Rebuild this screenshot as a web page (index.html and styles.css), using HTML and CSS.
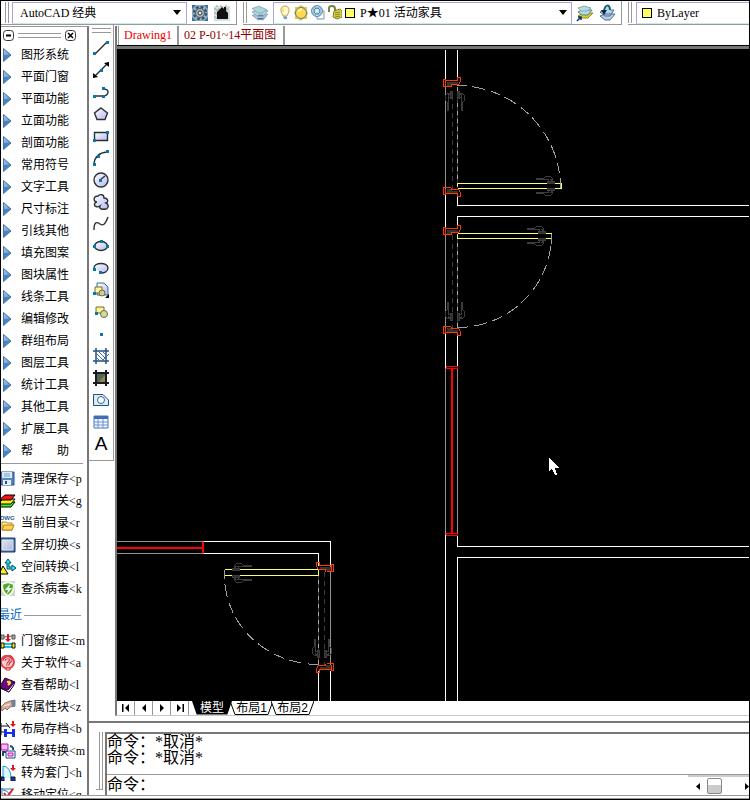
FILE: index.html
```html
<!DOCTYPE html>
<html lang="zh-CN">
<head>
<meta charset="utf-8">
<title>AutoCAD</title>
<link rel="stylesheet" href="styles.css">
</head>
<body>
<svg class="defs" aria-hidden="true">
  <defs>
    <linearGradient id="blue" x1="0" y1="0" x2="1" y2="1"><stop offset="0" stop-color="#a9c8e6"/><stop offset=".55" stop-color="#6f9fd0"/><stop offset="1" stop-color="#2a62a6"/></linearGradient>
    <linearGradient id="soft" x1="0" y1="0" x2="1" y2="1"><stop offset="0" stop-color="#fff"/><stop offset="1" stop-color="#b4b8ee"/></linearGradient>
    <linearGradient id="pale" x1="0" y1="0" x2="1" y2="1"><stop offset="0" stop-color="#d2ecec"/><stop offset="1" stop-color="#b6b4e2"/></linearGradient>
    <symbol id="tri" viewBox="0 0 10 16"><path d="M1.500 1.500V14.500L9 8Z" fill="url(#blue)" stroke="#3f74ac"/><path d="M2 8H8L2 13.500Z" fill="#4a82bf"/></symbol>
    <symbol id="down" viewBox="0 0 8 5"><path d="M0 0H8L4 5Z"/></symbol>
    <symbol id="layers" viewBox="0 0 16 16"><g stroke="#7f98ae" stroke-width=".7"><path d="M1 10L6 9H15L11 14H6Z" fill="#a8c4dc"/><path d="M1 7L6 6H15L11 11H6Z" fill="#b8dbe2"/><path d="M1 4L7 2L14 5L10 8H6Z" fill="#a9d8dc"/></g><path d="M6 13H11M6 10H11" stroke="#526d92"/></symbol>
    <g id="jamb"><path d="M3 4H14V6H8V8H3Z" fill="#333"/><path d="M7 9H0V2H2V8M2 3H14V0H17V4L15 7H8V9" fill="none" stroke="#ff3800"/></g>
    <g id="lever" fill="none" stroke="#3c3c3c"><path d="M0 2H8L10 0H15L17 2V5H13V3H0M14 3H16V5"/><path d="M12 5H19V7H12Z" fill="#2c2c2c"/></g>
    <g id="levers"><use href="#lever"/><use href="#lever" transform="translate(0 19) scale(1 -1)"/></g>
  </defs>
</svg>

<header class="toolbar">
  <div class="bar bar-space">
    <span class="grip"></span>
    <div class="combo">
      <select aria-label="工作空间"><option>AutoCAD 经典</option></select>
      <svg class="caret" width="8" height="5"><use href="#down"/></svg>
    </div>
    <button aria-label="工作空间设置"><svg width="18" height="18" viewBox="0 0 18 18"><path d="M1 1H17V17H1Z" fill="#8fb0c8"/><path d="M1 1H5L1 5ZM13 17H17V13ZM1 13V17H5ZM13 1H17V5Z" fill="#3f6f9e"/><circle cx="9" cy="9" r="6" fill="none" stroke="#40525e" stroke-width="2.500" stroke-dasharray="2.700 2"/><circle cx="9" cy="9" r="4.500" fill="#aab8b8" stroke="#4c5c66"/><circle cx="9" cy="9" r="2" fill="#d9f0f4" stroke="#334"/></svg></button>
    <button aria-label="我的工作空间"><svg width="18" height="18" viewBox="0 0 18 18"><path d="M1 2H17V17H1Z" fill="#d4dfe0"/><path d="M1 5H17M1 9H17M1 13H17M4 1V17M8 1V17M13 1V17" stroke="#8fa1a3" stroke-dasharray="2 2"/><path d="M4 8L9 3L11 5V3H13V7L15 9V15H4Z" fill="#111"/></svg></button>
  </div>
  <div class="bar bar-layer">
    <span class="grip"></span>
    <button aria-label="图层特性"><svg width="18" height="18"><use href="#layers"/></svg></button>
    <div class="combo">
      <svg width="12" height="16" viewBox="0 0 12 16"><path d="M4 10C1 7 1 1 6 1S11 7 8 10V11H4Z" fill="#fffbd5" stroke="#c09a45"/><path d="M4 11.500H8V14H5Z" fill="#799bb8"/><path d="M4 3V7" stroke="#ffe56d" stroke-width="2"/></svg>
      <svg width="14" height="16" viewBox="0 0 14 16"><path d="M1 2H4L7 0L10 2H13V6L14 8L13 11V14H9L7 16L4 14H1V10L0 8L1 5Z" fill="#edc23c"/><circle cx="7" cy="8" r="5.500" fill="#ffd84d" stroke="#4885a5"/><path d="M4 6L8 4" stroke="#fff8a8" stroke-width="2"/></svg>
      <svg width="14" height="16" viewBox="0 0 14 16"><path d="M6 6H13V14H6Z" fill="#fff" stroke="#8093a3"/><circle cx="6" cy="6" r="5.500" fill="#93bed4" stroke="#608fae"/><path d="M6 1V11M1 6H11M3 3L9 9M9 3L3 9" stroke="#e6faff"/><circle cx="6" cy="6" r="3" fill="none" stroke="#477ba1"/></svg>
      <svg width="14" height="16" viewBox="0 0 14 16"><path d="M1 7V3Q1 1 4 1T7 4V8" fill="none" stroke="#6b8a40" stroke-width="2"/><path d="M6 6L12 4L14 6V12L9 14L5 12Z" fill="#ddd13b" stroke="#817c27"/><path d="M7 8L12 7M7 10L12 9M7 12L12 11" stroke="#7f8a2c"/></svg>
      <span class="swatch"></span>
      <select aria-label="图层"><option>P★01 活动家具</option></select>
      <svg class="caret" width="8" height="5"><use href="#down"/></svg>
    </div>
    <button aria-label="将对象的图层置为当前"><svg width="18" height="18" viewBox="0 0 18 18"><path d="M2 12L7 9H17L12 14H6Z" fill="#dfcf22" stroke="#8d882c"/><path d="M2 8L6 6H16L12 11H6Z" fill="#b5dcdf" stroke="#577f92"/><path d="M2 4L8 2L15 4L11 7H5Z" fill="#b5dcdf" stroke="#85a8ae"/><path d="M1 17L5 13M2 13H5V16" stroke="#08366b" fill="none" stroke-width="1.500"/></svg></button>
    <button aria-label="上一个图层"><svg width="18" height="18" viewBox="0 0 18 18"><path d="M2 12L7 10H17L12 16H7ZM2 8L7 6H16L12 12H7Z" fill="#b7cfe2" stroke="#536d93"/><path d="M7 2L14 5L11 8H5Z" fill="#b5dcdf"/><path d="M12 6C12 0 7 0 6 7" fill="none" stroke="#17627b" stroke-width="2"/><path d="M3 6H9L6 11Z" fill="#09285a"/></svg></button>
  </div>
  <div class="bar bar-color">
    <span class="grip"></span>
    <div class="combo">
      <span class="swatch"></span>
      <select aria-label="颜色"><option>ByLayer</option></select>
    </div>
  </div>
</header>

<div class="workspace">
  <aside class="menu">
    <div class="menu-head">
      <button aria-label="折叠"><svg width="11" height="11" viewBox="0 0 11 11"><rect x=".5" y=".5" width="10" height="10" rx="3" fill="#fff" stroke="#333"/><path d="M3 5.500H8" stroke="#000" stroke-width="2"/></svg></button>
      <span class="rails"></span>
      <button aria-label="关闭"><svg width="11" height="11" viewBox="0 0 11 11"><rect x=".5" y=".5" width="10" height="10" rx="3" fill="#fff" stroke="#333"/><path d="M3 3L8 8M8 3L3 8" stroke="#000" stroke-width="1.500"/></svg></button>
    </div>
    <nav class="groups">
      <button><svg><use href="#tri"/></svg>图形系统</button>
      <button><svg><use href="#tri"/></svg>平面门窗</button>
      <button><svg><use href="#tri"/></svg>平面功能</button>
      <button><svg><use href="#tri"/></svg>立面功能</button>
      <button><svg><use href="#tri"/></svg>剖面功能</button>
      <button><svg><use href="#tri"/></svg>常用符号</button>
      <button><svg><use href="#tri"/></svg>文字工具</button>
      <button><svg><use href="#tri"/></svg>尺寸标注</button>
      <button><svg><use href="#tri"/></svg>引线其他</button>
      <button><svg><use href="#tri"/></svg>填充图案</button>
      <button><svg><use href="#tri"/></svg>图块属性</button>
      <button><svg><use href="#tri"/></svg>线条工具</button>
      <button><svg><use href="#tri"/></svg>编辑修改</button>
      <button><svg><use href="#tri"/></svg>群组布局</button>
      <button><svg><use href="#tri"/></svg>图层工具</button>
      <button><svg><use href="#tri"/></svg>统计工具</button>
      <button><svg><use href="#tri"/></svg>其他工具</button>
      <button><svg><use href="#tri"/></svg>扩展工具</button>
      <button><svg><use href="#tri"/></svg>帮　　助</button>
    </nav>
    <div class="shortcuts ruled">
      <button><svg viewBox="0 0 15 16"><path d="M0 1H13V14H0Z" fill="#5688c7" stroke="#244f92"/><path d="M1 1H11V7H1Z" fill="#dceaf8"/><path d="M3 3H9M3 5H9" stroke="#7d9bc4"/><path d="M2 9H10V14H2Z" fill="#e7edf4"/><path d="M4 10H6V13H4Z" fill="#244f92"/></svg>清理保存&lt;p</button>
      <button><svg viewBox="0 0 15 16"><g stroke="#000"><path d="M-3 14L2 9H14L10 14Z" fill="#3df02c"/><path d="M-3 11L2 6H14L10 11Z" fill="#ffed1c"/><path d="M-2 7L4 2H14L10 7Z" fill="#f31616"/></g></svg>归层开关&lt;g</button>
      <button><svg viewBox="0 0 15 16"><text x="-1" y="5" class="dwg">DWG</text><path d="M1 7H5L6 8H11V15H1Z" fill="#fff2a2" stroke="#b6841b"/><path d="M3 10H13L11 15H1Z" fill="#ffd24c" stroke="#b6841b"/></svg>当前目录&lt;r</button>
      <button><svg viewBox="0 0 15 16"><path d="M-1 1H14V15H-1Z" fill="#526f9b" stroke="#173a6c"/><path d="M1 3H12V13H1Z" fill="url(#pale)" stroke="#d9e7f4"/></svg>全屏切换&lt;s</button>
      <button><svg viewBox="0 0 15 16"><path d="M-2 15L2 7L7 15Z" fill="#fff21d" stroke="#000"/><path d="M6 10V4H4L7 0L10 4H8V8H11V6L15 9L11 12V10Z" fill="#22dff0" stroke="#09505c"/></svg>空间转换&lt;l</button>
      <button><svg viewBox="0 0 15 16"><path d="M0 0H14V15H0Z" fill="#cfd4cc"/><path d="M7 1L13 3C13 10 11 13 7 15C3 13 1 10 1 3Z" fill="#4fa82b" stroke="#eef8eb" stroke-width="2"/><path d="M9 3L4 9H7L6 13L11 7H8Z" fill="#fff"/></svg>查杀病毒&lt;k</button>
    </div>
    <h2 class="recent">最近</h2>
    <div class="shortcuts">
      <button><svg viewBox="0 0 15 16"><path d="M0 2H3V6H0ZM11 2H14V6H11ZM3 4L11 3" fill="#aaa" stroke="#555"/><path d="M6 1H8V6H10L7 9L4 6H6Z" fill="#e6101c"/><path d="M2 11H12M2 14H12" stroke="#20bde4" stroke-width="2"/><path d="M0 10H3V15H0ZM11 10H14V15H11Z" fill="#ffe71d" stroke="#111"/></svg>门窗修正&lt;m</button>
      <button><svg viewBox="0 0 15 16"><circle cx="6.500" cy="7" r="6.500" fill="#fbd0d0" stroke="#e0444c" stroke-width="2"/><path d="M3 6C3 2 10 2 10 5C10 7 6 7 7 11" fill="none" stroke="#d02838" stroke-width="3"/><path d="M3 6C3 2 10 2 10 5C10 7 6 7 7 11" fill="none" stroke="#fff"/><path d="M5 13H9V15H5Z" fill="#fff" stroke="#d22"/></svg>关于软件&lt;a</button>
      <button><svg viewBox="0 0 15 16"><path d="M-1 9L4 1L14 5L8 15L-1 11Z" fill="#6c087b" stroke="#280035"/><path d="M0 11L7 13L13 6V8L8 15Z" fill="#fff" stroke="#280035"/><path d="M6 5Q9 4 9 6L7 8" fill="none" stroke="#ffe436" stroke-width="2"/></svg>查看帮助&lt;l</button>
      <button><svg viewBox="0 0 15 16"><path d="M0 8L4 4L9 2L14 1V7L9 8L6 11L4 9L1 12Z" fill="#dbac98" stroke="#9b6d67"/><path d="M10 1H14V8H11Z" fill="#6f839e"/><path d="M3 7L9 5" stroke="#fff0e2"/></svg>转属性块&lt;z</button>
      <button><svg viewBox="0 0 15 16"><path d="M0 5H8M0 11H5M5 2L9 7M0 2V14" stroke="#111" fill="none"/><path d="M3 8H14V16H3Z" fill="#1732df"/><path d="M6 8H11V11H6ZM6 13H11V16H6Z" fill="#fff"/><path d="M11 0H13V3H15L12 6L9 3H11Z" fill="#e9121d"/></svg>布局存档&lt;b</button>
      <button><svg viewBox="0 0 15 16"><path d="M0 1H7V7H0Z" fill="#ffb2f4" stroke="#b014ad"/><path d="M9 3Q13 4 12 7M5 9H2V13" fill="none" stroke="#164881" stroke-width="2"/><path d="M5 8H14V15H5Z" fill="#fff" stroke="#164881"/><path d="M7 10H12V13H7Z" fill="#ffb2f4" stroke="#c019b8"/></svg>无缝转换&lt;m</button>
      <button><svg viewBox="0 0 15 16"><path d="M2 13V1Q10 2 10 13" fill="#d8f7ff" stroke="#1b9cbd"/><path d="M0 12H3V16H0ZM10 12H14V16H10Z" fill="#1732df" stroke="#111"/><path d="M11 0H13V3H15L12 6L9 3H11Z" fill="#e9121d"/></svg>转为套门&lt;h</button>
      <button><svg viewBox="0 0 15 16"><path d="M0 2H13M1 1V15M2 3Q9 4 10 12" fill="none" stroke="#277bc1"/><path d="M3 6L6 10L12 2" fill="none" stroke="#e31b25" stroke-width="2"/></svg>移动定位&lt;q</button>
    </div>
  </aside>

  <div class="draw">
    <div class="draw-tools">
      <span class="rails"></span>
      <button aria-label="直线"><svg viewBox="0 0 16 16"><path d="M2 14L14 2" class="k"/><path d="M0 12H3V15H0ZM13 1H16V4H13Z" class="n"/></svg></button>
      <button aria-label="构造线"><svg viewBox="0 0 16 16"><path d="M1 15L15 1" class="k"/><path d="M0 16V11L5 15ZM16 0V5L11 1Z"/><path d="M7 7H10V10H7Z" class="n"/></svg></button>
      <button aria-label="多段线"><svg viewBox="0 0 16 16"><path d="M1 12H11M10 5Q15 5 15 8T11 12" class="k"/><path d="M0 11H3V14H0ZM9 11H12V14H9ZM9 3H12V6H9Z" class="n"/></svg></button>
      <button aria-label="正多边形"><svg viewBox="0 0 16 16"><path d="M8 2L14.500 7L12 13.500H4L1.500 7Z" class="k s"/></svg></button>
      <button aria-label="矩形"><svg viewBox="0 0 16 16"><path d="M1.500 4.500H14.500V12.500H1.500Z" class="k s"/><path d="M0 11H3V14H0ZM13 3H16V6H13Z" class="n"/></svg></button>
      <button aria-label="圆弧"><svg viewBox="0 0 16 16"><path d="M1 14Q2 3 14 2" class="k"/><path d="M0 13H3V16H0ZM4 5H7V8H4ZM13 0H16V3H13Z" class="n"/></svg></button>
      <button aria-label="圆"><svg viewBox="0 0 16 16"><circle cx="8" cy="8" r="7" class="k s"/><path d="M7 8L12 4" class="k"/><path d="M6 7H9V10H6Z" class="n"/></svg></button>
      <button aria-label="修订云线"><svg viewBox="0 0 16 16"><path d="M5 2C7 0 11 0 11 4C15 4 16 8 13 9C17 11 15 16 11 15C8 16 6 14 7 12C4 14 0 12 2 9C3 8 4 8 4 8C0 8 0 2 5 2Z" class="k s"/></svg></button>
      <button aria-label="样条曲线"><svg viewBox="0 0 16 16"><path d="M1 14C1 5 4 6 7 8S12 9 15 1" class="k"/></svg></button>
      <button aria-label="椭圆"><svg viewBox="0 0 16 16"><ellipse cx="8" cy="8" rx="6.500" ry="4.500" class="k s"/><path d="M0 7H3V10H0ZM13 7H16V10H13ZM7 2H10V5H7Z" class="n"/></svg></button>
      <button aria-label="椭圆弧"><svg viewBox="0 0 16 16"><path d="M1 8C1 2 15 2 15 8C15 11 12 13 8 13" class="k s"/><path d="M0 8H3V11H0ZM6 11H9V14H6Z" class="n"/></svg></button>
      <button aria-label="插入块"><svg viewBox="0 0 16 16"><path d="M4 1H11L15 5V13H4Z" class="s" stroke="#3b6b91"/><path d="M2 5H9V11H2Z" fill="#fff7a4" stroke="#756f30"/><circle cx="9" cy="11" r="3" fill="#d4d080" stroke="#656c4a"/><path d="M0 10H3V13H0Z" class="n"/><path d="M16 12V16H12Z"/></svg></button>
      <button aria-label="创建块"><svg viewBox="0 0 16 16"><path d="M3 3H11V9H3Z" fill="#fff493" stroke="#756f30"/><circle cx="11" cy="10" r="3.500" fill="#d4dba0" stroke="#656c4a"/><path d="M2 8H5V11H2Z" class="n"/></svg></button>
      <button aria-label="点"><svg viewBox="0 0 16 16"><path d="M7 7H10V10H7Z" class="n"/></svg></button>
      <button aria-label="图案填充"><svg viewBox="0 0 16 16"><path d="M3 0V16M13 0V16M0 3H16M0 13H16" stroke="#235087" stroke-width="1.500"/><path d="M3 9L7 13M3 5L11 13M5 3L13 11M9 3L13 7M9 13L16 6" stroke="#477099" fill="none"/></svg></button>
      <button aria-label="渐变色"><svg viewBox="0 0 16 16"><path d="M3 3H13V13H3Z" fill="#55645a"/><path d="M6 12L12 5V12Z" fill="#92884b"/><path d="M3 0V16M13 0V16M0 3H16M0 13H16" stroke="#171b22" stroke-width="2"/></svg></button>
      <button aria-label="面域"><svg viewBox="0 0 16 16"><path d="M.5 2.500H10L15.500 8V13.500H.5Z" fill="#dcecf7" stroke="#17538b"/><circle cx="8" cy="8" r="3.500" fill="#fff" stroke="#37658a"/></svg></button>
      <button aria-label="表格"><svg viewBox="0 0 16 16"><path d="M1 2H15V14H1Z" fill="#f4f9ff" stroke="#4a72b7"/><path d="M1 2H15V5H1Z" fill="#426bb8"/><path d="M1 8H15M1 11H15M5 5V14M10 5V14" stroke="#6b92d0"/></svg></button>
      <button class="letter" aria-label="多行文字">A</button>
    </div>

    <main class="document">
      <nav class="files">
        <a href="#drawing" class="current">Drawing1</a>
        <a href="#plan">02 P-01~14平面图</a>
      </nav>
      <svg class="canvas" id="drawing" role="img" aria-label="平面图">
        <g transform="translate(-116.500 -48.500)" fill="none" shape-rendering="crispEdges">
          <g stroke="#fff">
            <path d="M445 49V82M445 190V230M445 330V367M445 534V700M457 49V79M457 193V205H750M750 216H457V227M457 332V367M457 534V546H750M750 557H457V700"/>
            <path d="M203 541H330V565M203 553H318V565M318 670V700M330 670V700"/>
          </g>
          <g stroke="#929292">
            <path d="M445 82V190M445 230V330M445 367V534M457 367V534M116 541H203M116 553H203M330 565V669"/>
          </g>
          <g stroke="#3c3c3c"><path d="M452 94V190M452 234V330M324 571V664" stroke-dasharray="5 4"/><path d="M457 86V187M457 234V327M318 571V664"/></g>
          <path d="M457 86V187M457 234V327M318 571V664" stroke="#aaa" stroke-dasharray="4 4"/>
          <g stroke="#ffff6d">
            <path d="M457 185V183H561V188H457"/>
            <path d="M457 238V233M457 233H551M457 238H551"/>
            <path d="M318 569H224M318 569V575H224"/>
          </g>
          <g stroke="#a0a0a0">
            <path d="M560 180V187M551 233V243M224 569V577"/>
            <path d="M457 85A104 103 0 0 1 560 183" stroke-dasharray="10 5 13 6"/>
            <path d="M457 327A94 93 0 0 0 551 238" stroke-dasharray="11 6 13 5"/>
            <path d="M318 664A94 89 0 0 1 224 575" stroke-dasharray="11 6 13 5"/>
          </g>
          <g>
            <use href="#levers" x="535" y="176"/>
            <use href="#levers" x="526" y="226"/>
            <use href="#levers" transform="translate(251 563) scale(-1 1)"/>
            <use href="#levers" transform="translate(445 110) rotate(-90)"/>
            <use href="#levers" transform="translate(464 301) rotate(90)"/>
            <use href="#levers" transform="translate(331 638) rotate(90)"/>
          </g>
          <g>
            <use href="#jamb" transform="translate(443 77)"/>
            <use href="#jamb" transform="translate(443 196) scale(1 -1)"/>
            <use href="#jamb" transform="translate(443 225)"/>
            <use href="#jamb" transform="translate(443 335) scale(1 -1)"/>
            <use href="#jamb" transform="translate(333 562) scale(-1 1)"/>
            <use href="#jamb" transform="translate(333 672) scale(-1 -1)"/>
          </g>
          <path transform="translate(-.5 -.5)" d="M451 368H453V534H451ZM116 547H203V549H116ZM202 542H204V553H202Z" fill="#f00"/>
          <path d="M446 366H457V368H446ZM446 533H457V535H446Z" stroke="#f00"/>
          <path d="M548 457V471L551 468L554 474H556V472L554 467H558Z" fill="#fff"/>
        </g>
      </svg>
      <div class="layouts">
        <button class="nav" aria-label="第一个"><svg viewBox="0 0 8 8"><path d="M0 0H1.500V8H0ZM7 0V8L3 4Z"/></svg></button>
        <button class="nav" aria-label="上一个"><svg viewBox="0 0 8 8"><path d="M6 0V8L2 4Z"/></svg></button>
        <button class="nav" aria-label="下一个"><svg viewBox="0 0 8 8"><path d="M2 0V8L6 4Z"/></svg></button>
        <button class="nav" aria-label="最后一个"><svg viewBox="0 0 8 8"><path d="M1 0V8L5 4ZM6.500 0H8V8H6.500Z"/></svg></button>
        <div class="sheets">
          <button class="sheet on"><svg viewBox="0 0 43 14" preserveAspectRatio="none"><path d="M0 0H43L38 13.500H5Z" fill="#000"/></svg><span>模型</span></button>
          <button class="sheet"><svg viewBox="0 0 43 14" preserveAspectRatio="none"><path d="M0 0L5 13.500H38L43 0" fill="#fff" stroke="#000"/></svg><span>布局1</span></button>
          <button class="sheet"><svg viewBox="0 0 43 14" preserveAspectRatio="none"><path d="M0 0L5 13.500H38L43 0" fill="#fff" stroke="#000"/></svg><span>布局2</span></button>
        </div>
      </div>
    </main>

    <section class="command">
      <span class="command-grip"></span>
      <div class="console">
        <div class="history">
          <p>命令：*取消*</p>
          <p>命令：*取消*</p>
        </div>
        <div class="prompt">
          <label for="cmd">命令：</label>
          <input id="cmd" type="text">
          <div class="scroll">
            <svg width="4" height="7" viewBox="0 0 4 7"><path d="M4 0V7L0 3.500Z"/></svg>
            <span class="thumb"></span>
            <svg width="4" height="7" viewBox="0 0 4 7"><path d="M0 0V7L4 3.500Z"/></svg>
          </div>
        </div>
      </div>
    </section>
  </div>
</div>
<footer class="foot"></footer>
</body>
</html>
```
FILE: styles.css
```css
* { box-sizing: border-box; }
html { height: 100%; }
body {
  margin: 0;
  height: 100vh;
  display: flex;
  flex-direction: column;
  overflow: hidden;
  border: 1px solid #000;
  background: #fff;
  color: #000;
  font: 12px/16px "Liberation Serif", "Noto Sans CJK SC", serif;
}
button, select, input {
  margin: 0;
  padding: 0;
  border: 0;
  border-radius: 0;
  background: none;
  color: inherit;
  font: inherit;
}
select { appearance: none; outline: 0; }
svg { display: block; flex: none; }
.defs { position: absolute; width: 0; height: 0; }

/* top toolbar */
.toolbar { display: flex; flex: none; height: 24px; gap: 6px; }
.bar { display: flex; align-items: center; border-bottom: 1px solid #999; }
.bar-space { width: 236px; padding-left: 4px; border-right: 1px solid #999; }
.bar-layer { flex: 1; min-width: 0; padding-right: 5px; border-right: 1px solid #999; }
.bar-color { width: 121px; }
.grip { flex: none; width: 4px; height: 21px; border: solid #999; border-width: 0 1px; }
.bar > button { width: 18px; margin-left: 4px; }
.bar-layer > .grip + button { margin: 0 4px; }
.combo {
  display: flex;
  align-items: center;
  height: 22px;
  gap: 3px;
  border: 1px solid #a8a4dc;
  border-bottom-color: #c4efe9;
}
.bar-space .combo { width: 175px; margin-left: 3px; padding: 0 5px; }
.bar-layer .combo { flex: 1; min-width: 0; padding: 0 4px 0 5px; }
.bar-color .combo { flex: 1; margin-left: 4px; padding-left: 5px; border-right: 0; }
.combo select { flex: 1; min-width: 0; height: 20px; padding: 0 2px; }
.swatch { flex: none; width: 10px; height: 10px; border: 1px solid #000; background: #ffff66; }

.workspace { display: flex; flex: 1; min-height: 0; }

/* tool menu */
.menu {
  flex: none;
  width: 88px;
  margin-top: 1px;
  overflow: hidden;
  border-top: 1px solid #999;
  border-right: 2px solid #777;
}
.menu-head { display: flex; align-items: center; height: 17px; gap: 4px; padding: 0 11px 0 2px; }
.menu-head button { width: 11px; }
.rails { display: block; height: 5px; border: solid #999; border-width: 1px 0; }
.menu-head .rails { flex: 1; }
.groups button, .shortcuts button {
  display: flex;
  align-items: center;
  width: 100%;
  height: 22px;
  white-space: nowrap;
}
.groups svg { width: 10px; height: 16px; margin: 0 9px 0 1px; }
.shortcuts svg { width: 15px; height: 16px; margin-right: 5px; }
.ruled { margin: 1px 4px 0 0; padding-top: 4px; border-top: 1px solid #999; }
.dwg { font: bold 6px "Liberation Sans", sans-serif; fill: #225a94; }
.recent {
  display: flex;
  align-items: center;
  gap: 2px;
  height: 30px;
  margin: 0 6px 0 -3px;
  color: #0a68c4;
  font: inherit;
}
.recent::after { content: ""; flex: 1; border-top: 1px solid #999; }

/* drawing side */
.draw {
  display: grid;
  flex: 1;
  min-width: 0;
  grid-template: minmax(0, 1fr) auto / 26px minmax(0, 1fr);
}
.draw-tools {
  align-self: start;
  width: 25px;
  padding: 3px 0 5px;
  border-right: 1px solid #999;
  border-bottom: 1px solid #999;
}
.draw-tools .rails { margin: 0 2px 4px 3px; }
.draw-tools button { display: flex; align-items: center; justify-content: center; width: 24px; height: 22px; }
.draw-tools svg { width: 16px; height: 16px; }
.draw-tools .letter { font: 19px/22px "Liberation Sans", sans-serif; }
.k { fill: none; stroke: #2c3034; stroke-width: 1.4; }
.s { fill: url(#soft); }
.n { fill: #0878ac; }

.document {
  display: flex;
  flex-direction: column;
  min-height: 0;
  margin-top: 1px;
  border-left: 2px solid #777;
  border-bottom: 1px solid #c8c8c8;
}
.files {
  display: flex;
  flex: none;
  height: 23px;
  padding-left: 1px;
  border-bottom: 3px solid #777;
  box-shadow: inset 0 -1px #000;
}
.files a {
  height: 19px;
  padding: 0 7px 0 5px;
  border-right: 2px solid #999;
  color: #900000;
  line-height: 18px;
  text-decoration: none;
}
.files a.current { padding-right: 5px; border-left: 1px solid #999; color: #f00000; }
.canvas { flex: 1; width: 100%; min-height: 0; background: #000; }
.layouts { display: flex; flex: none; height: 14px; }
.nav { display: flex; align-items: center; justify-content: center; width: 18px; border-right: 1px solid #999; }
.nav svg { width: 8px; height: 8px; }
.sheets { display: flex; padding-left: 3px; }
.sheet { position: relative; width: 43px; height: 14px; font: 12px/14px "Liberation Sans", "Noto Sans CJK SC", sans-serif; }
.sheet + .sheet { margin-left: -2px; }
.sheet svg { position: absolute; inset: 0; width: 100%; height: 100%; }
.sheet span { position: relative; }
.sheet.on { z-index: 1; width: 40px; color: #fff; }

/* command line */
.command {
  grid-column: 1 / 3;
  display: flex;
  height: 74px;
  margin-top: 5px;
  padding: 9px 0 0 7px;
  border-top: 2px solid #777;
}
.command-grip { width: 7px; height: 58px; border: solid #999; border-width: 0 1px 1px 0; }
.command-grip::before { content: ""; display: block; width: 3px; height: 57px; border-right: 1px solid #999; }
.console {
  display: flex;
  flex: 1;
  flex-direction: column;
  min-width: 0;
  margin-left: 2px;
  border: solid #777;
  border-width: 2px 0 0 2px;
  font-size: 16px;
}
.history { height: 41px; border-bottom: 1px solid #999; }
.history p { margin: 0; }
.prompt { display: flex; align-items: center; height: 20px; }
.prompt input { flex: 1; min-width: 0; outline: 0; }
.scroll { display: flex; align-items: center; gap: 7px; height: 20px; padding-left: 8px; border-top: 2px solid #ccc; }
.thumb {
  width: 15px;
  height: 16px;
  margin-right: 16px;
  border: 1px solid #888;
  border-radius: 2px;
  background: linear-gradient(#fff 45%, #ccc 45%);
}
.foot { flex: none; height: 4px; border: solid #999; border-width: 1px 0; }
```
